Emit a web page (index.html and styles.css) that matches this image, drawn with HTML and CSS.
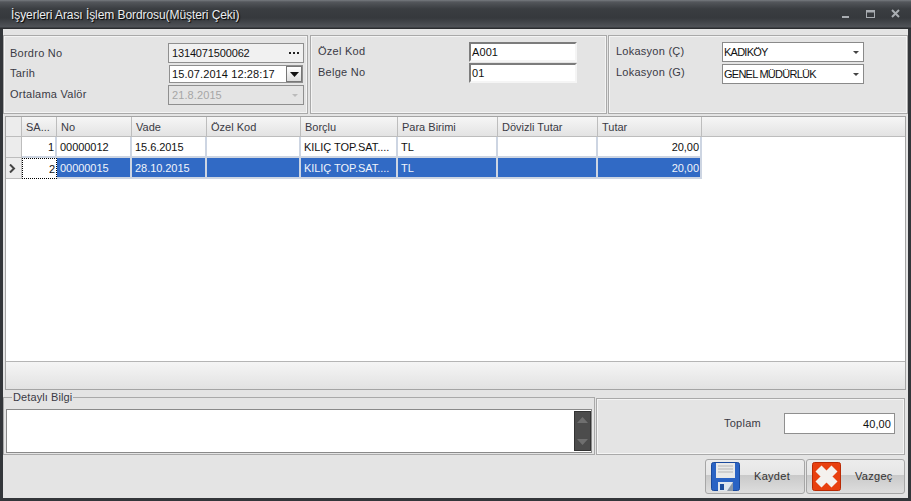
FILE: index.html
```html
<!DOCTYPE html>
<html lang="tr">
<head>
<meta charset="utf-8">
<title>İşyerleri Arası İşlem Bordrosu</title>
<link rel="stylesheet" href="styles.css">
</head>
<body>
<div class="window">
  <header class="titlebar">
    <span class="title">İşyerleri Arası İşlem Bordrosu(Müşteri Çeki)</span>
    <div class="winbtns">
      <svg width="10" height="10" viewBox="0 0 10 10"><rect x="1" y="7" width="7" height="2" fill="#a9adb2"/></svg>
      <svg width="10" height="10" viewBox="0 0 10 10"><rect x="0.500" y="1.500" width="8" height="7" fill="none" stroke="#a9adb2"/><rect x="0" y="1" width="9" height="2.500" fill="#a9adb2"/></svg>
      <svg width="10" height="10" viewBox="0 0 10 10"><path d="M1 1l7 7M8 1L1 8" stroke="#a9adb2" stroke-width="2"/></svg>
    </div>
  </header>
  <main class="body">
    <section class="top">
      <div class="panel p1">
        <div class="lbl">Bordro No</div>
        <div class="field flat grayish"><span>1314071500062</span><svg width="10" height="2" viewBox="0 0 10 2"><path d="M0 0h2v2H0zM4 0h2v2H4zM8 0h2v2H8z" fill="#222"/></svg></div>
        <div class="lbl up">Tarih</div>
        <div class="field sunken"><span>15.07.2014 12:28:17</span><i class="dropbtn"><svg width="9" height="5" viewBox="0 0 9 5"><path d="M0 0h9L4.500 5z" fill="#111"/></svg></i></div>
        <div class="lbl up">Ortalama Valör</div>
        <div class="field flat disabled"><span>21.8.2015</span><svg width="6" height="3" viewBox="0 0 6 3"><path d="M0 0h6L3 3z" fill="#bbb"/></svg></div>
      </div>
      <div class="panel p2">
        <div class="lbl up">Özel Kod</div>
        <div class="field inset"><span>A001</span></div>
        <div class="lbl up">Belge No</div>
        <div class="field inset"><span>01</span></div>
      </div>
      <div class="panel p3">
        <div class="lbl up">Lokasyon (Ç)</div>
        <div class="field combo"><span>KADIKÖY</span><svg width="6" height="3" viewBox="0 0 6 3"><path d="M0 0h6L3 3z" fill="#444"/></svg></div>
        <div class="lbl up2">Lokasyon (G)</div>
        <div class="field combo"><span>GENEL MÜDÜRLÜK</span><svg width="6" height="3" viewBox="0 0 6 3"><path d="M0 0h6L3 3z" fill="#444"/></svg></div>
      </div>
    </section>
    <section class="gridbox">
      <div class="grid">
        <div class="row head">
          <div class="c ind"></div><div class="c">SA...</div><div class="c">No</div><div class="c">Vade</div><div class="c">Özel Kod</div><div class="c">Borçlu</div><div class="c">Para Birimi</div><div class="c">Dövizli Tutar</div><div class="c">Tutar</div><div class="c end"></div>
        </div>
        <div class="row">
          <div class="c ind"></div><div class="c r">1</div><div class="c">00000012</div><div class="c">15.6.2015</div><div class="c"></div><div class="c">KILIÇ TOP.SAT....</div><div class="c">TL</div><div class="c"></div><div class="c r">20,00</div>
        </div>
        <div class="row sel">
          <div class="c ind"><svg width="7" height="9" viewBox="0 0 7 9"><path d="M1 0.500l4 4-4 4" fill="none" stroke="#444" stroke-width="2"/></svg></div><div class="c r focus">2</div><div class="c">00000015</div><div class="c">28.10.2015</div><div class="c"></div><div class="c">KILIÇ TOP.SAT....</div><div class="c">TL</div><div class="c"></div><div class="c r">20,00</div>
        </div>
      </div>
      <div class="gridfoot"></div>
    </section>
    <section class="bottom">
      <fieldset class="detail">
        <legend>Detaylı Bilgi</legend>
        <div class="memo">
          <div class="scroll">
            <svg width="11" height="6" viewBox="0 0 11 6"><path d="M5.500 0L11 6H0z" fill="#6f6f6f"/></svg>
            <svg width="11" height="6" viewBox="0 0 11 6"><path d="M5.500 6L11 0H0z" fill="#6f6f6f"/></svg>
          </div>
        </div>
      </fieldset>
      <div class="panel total">
        <div class="lbl">Toplam</div>
        <div class="field flat tot"><span>40,00</span></div>
      </div>
    </section>
    <footer class="actions">
      <button class="btn">
        <svg width="29" height="29" viewBox="0 0 29 29"><rect x="0.500" y="0.500" width="28" height="28" rx="2" fill="#2a63c4" stroke="#1b4a9c"/><rect x="5" y="1" width="19" height="15" fill="#e9e9e9"/><path d="M7 4h15M7 7h15M7 10h15" stroke="#b5b5b5"/><rect x="7" y="20" width="15" height="9" fill="#dfe6ee"/><rect x="9" y="22" width="4" height="6" fill="#1d4d9c"/><path d="M16 29l6-9v9z" fill="#8a97a8"/></svg>
        <span>Kaydet</span>
      </button>
      <button class="btn">
        <svg width="29" height="29" viewBox="0 0 29 29"><rect x="0.500" y="0.500" width="28" height="28" rx="2" fill="#e8400f" stroke="#b92a05"/><path d="M6.500 6.500l16 16M22.500 6.500l-16 16" stroke="#f4f1ee" stroke-width="8.500"/></svg>
        <span>Vazgeç</span>
      </button>
    </footer>
  </main>
</div>
</body>
</html>
```
FILE: styles.css
```css
* { box-sizing: border-box; }
html, body { margin: 0; padding: 0; }
body { width: 911px; height: 501px; overflow: hidden; font: 11px "Liberation Sans", Arial, sans-serif; color: #111; }
.window { width: 911px; height: 501px; background: #33363a; padding-bottom: 3px; display: flex; flex-direction: column; }
.titlebar { height: 29px; flex: none; display: flex; align-items: center; justify-content: space-between; padding: 0 10px 0 11px;
  background: linear-gradient(#777b80 0, #53565b 2px, #3a3d41 9px, #36393d 18px, #505358 27px, #2b2d30 28px); }
.title { color: #eceef0; font-size: 12px; letter-spacing: -0.07px; text-shadow: 1px 1px 1px #000; }
.winbtns { display: flex; gap: 15px; margin-bottom: 1px; }
.body { flex: 1; margin: 0 3px; background: #e4e4e4; display: flex; flex-direction: column; padding-top: 6px; min-height: 0; }
.top { display: flex; height: 79px; flex: none; gap: 1px; }
.panel { border: 1px solid #a9a9a9; outline: 1px solid #f4f4f4; outline-offset: -2px; }
.p1, .p2, .p3 { display: grid; align-content: start; row-gap: 1px; grid-auto-rows: 20px; align-items: center; }
.p1 { width: 305px; padding: 7px 4px 0 6px; grid-template-columns: 158px 136px; }
.p2 { width: 297px; margin-left: 1px; padding: 6px 29px 0 7px; grid-template-columns: 151px 108px; }
.p3 { flex: 1; padding: 6px 43px 0 7px; grid-template-columns: 106px 142px; row-gap: 2px; }
.lbl { color: #3a3a44; letter-spacing: 0.25px; }
.up { padding-bottom: 2px; }
.up2 { padding-bottom: 4px; }
.field { height: 20px; display: flex; align-items: center; justify-content: space-between; background: #fff; padding: 0 3px; letter-spacing: 0.1px; }
.flat { border: 1px solid #8f8f8f; }
.grayish { background: #f1f1f1; padding-right: 4px; letter-spacing: -0.15px; }
.sunken { border: 1px solid #8f8f8f; padding: 0 0 0 2px; margin: 1px; height: 18px; width: 134px; border-right-width: 1px; }
.dropbtn { width: 16px; height: 16px; background: linear-gradient(#fff, #ddd); border: 1px solid #777; display: flex; align-items: center; justify-content: center; }
.disabled { background: #e4e4e4; color: #a6a6a6; padding-right: 5px; }
.inset { border: 2px solid #f5f5f5; border-top-color: #7c7c7c; border-left-color: #7c7c7c; padding: 0 1px; }
.combo { border: 1px solid #8a8a8a; padding: 0 4px 0 1px; letter-spacing: -0.75px; }
.gridbox { margin: 2px 2px 0; height: 274px; flex: none; border: 1px solid #a4a4a4; background: #fff; display: flex; flex-direction: column; }
.grid { flex: 1; }
.row { display: grid; height: 21px; grid-template-columns: 16px 35px 75px 75px 94px 97px 100px 100px 104px; }
.row.head { height: 20px; grid-template-columns: 16px 35px 75px 75px 94px 97px 100px 100px 104px 1fr; background: linear-gradient(#f6f6f6, #e2e2e2); }
.c { padding: 0 3px; display: flex; align-items: center; border-right: 2px solid #cdd5e2; border-bottom: 2px solid #cdd5e2; white-space: nowrap; overflow: hidden; letter-spacing: -0.05px; }
.row .c.r { justify-content: flex-end; padding-right: 1px; }
.head .c { border-color: #bdbdbd; border-right-width: 1px; border-bottom-width: 1px; color: #3a3a44; padding-left: 4px; letter-spacing: 0; }
.head .end { border-right: 0; }
.ind { background: #ececec; padding: 0 0 0 3px; border-right: 1px solid #bdbdbd; border-bottom: 1px solid #bdbdbd; }
.sel .c:not(.ind):not(.focus) { background: #316ac5; color: #f0f4fb; }
.sel .focus { background: #fff; border: 1px dotted #000; }
.gridfoot { height: 28px; flex: none; border-top: 1px solid #b5b5b5; background: linear-gradient(#f5f5f5, #e2e2e2); }
.bottom { display: flex; height: 63px; flex: none; margin-top: 2px; }
.detail { width: 592px; height: 63px; margin: 0; padding: 0 2px 2px 2px; border: 1px solid #a9a9a9; min-width: 0; }
.detail legend { padding: 0 1px; margin-left: 6px; line-height: 11px; color: #3a3a44; letter-spacing: 0.1px; }
.memo { height: 44px; margin-top: 6px; background: #fff; border: 1px solid #8a8a8a; position: relative; }
.scroll { position: absolute; right: 0; top: 1px; bottom: 1px; width: 17px; background: #4c4c4c; border: 1px solid #333; display: flex; flex-direction: column; justify-content: space-between; align-items: center; padding: 5px 0; }
.total { margin-left: 1px; width: 309px; height: 57px; margin-top: 6px; display: flex; align-items: flex-start; padding: 14px 9px 0 127px; gap: 23px; }
.total .lbl { line-height: 20px; }
.tot { width: 112px; height: 21px; justify-content: flex-end; padding: 0 3px; }
.actions { flex: 1; display: flex; justify-content: flex-end; gap: 1px; padding: 4px 3px 3px 0; }
.btn { width: 100px; height: 35px; border: 1px solid #a6a6a6; border-radius: 3px; padding: 2px 0 0 5px; display: flex; align-items: flex-start; gap: 14px; font: 11px "Liberation Sans", Arial, sans-serif; color: #333; letter-spacing: 0.3px;
  background: linear-gradient(#ececec 0, #e6e6e6 45%, #c9c9c9 46%, #dedede 100%); }
.btn span { line-height: 29px; }
.btn + .btn { width: 99px; }
```
